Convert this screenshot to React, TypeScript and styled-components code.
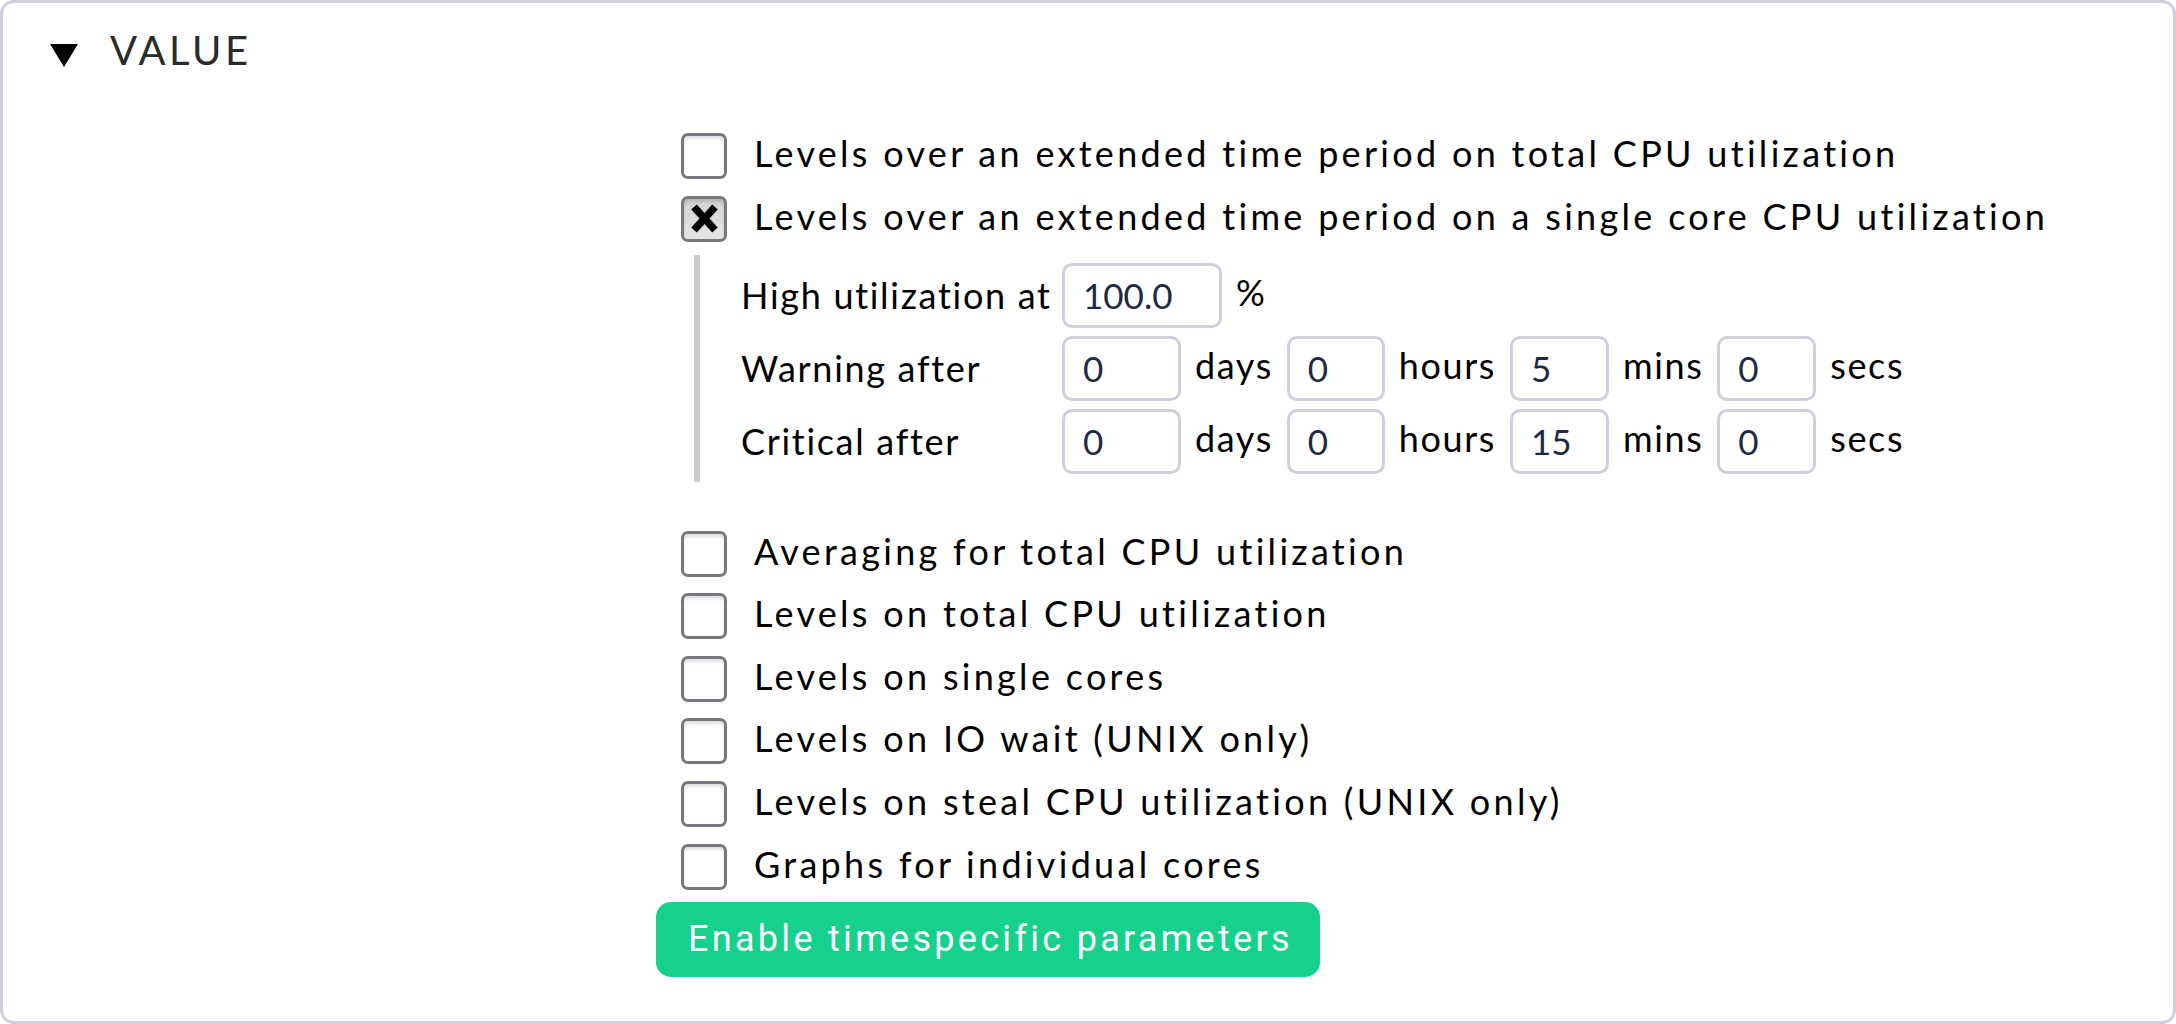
import React from 'react';
import styled, { createGlobalStyle } from 'styled-components';

const Global = createGlobalStyle`
  html, body { margin: 0; padding: 0; background: #fff; }
  body { font-family: Lato, "Noto Sans", sans-serif; color: #000; }
`;

const Frame = styled.div`
  box-sizing: border-box;
  width: 2176px;
  height: 1024px;
  border: 3px solid #cdcfdc;
  border-radius: 14px;
  background: #fff;
  display: flex;
  flex-direction: column;
`;

const Header = styled.div`
  display: flex;
  align-items: flex-start;
  gap: 32px;
  padding: 23px 0 0 47px;
`;

const Triangle = styled.span`
  width: 0;
  height: 0;
  margin-top: 18px;
  border-left: 14px solid transparent;
  border-right: 14px solid transparent;
  border-top: 23px solid #000;
`;

const Title = styled.span`
  font-family: Lato, sans-serif;
  font-size: 40px;
  line-height: 48px;
  letter-spacing: 3.5px;
  color: #2b2b2b;
`;

const Body = styled.div`
  display: flex;
  flex-direction: column;
  align-items: flex-start;
  padding: 50.7px 0 0 653px;
`;

const OptionRow = styled.label`
  display: flex;
  align-items: center;
  gap: 27px;
  height: 62.6px;
  padding-left: 25px;
`;

const Box = styled.span<{ $checked?: boolean }>`
  box-sizing: border-box;
  width: 46px;
  height: 46px;
  border: 3px solid #76787d;
  border-radius: 7px;
  display: flex;
  align-items: center;
  justify-content: center;
  background: ${(p) => (p.$checked ? 'linear-gradient(#d2d2d2, #e6e6e6)' : '#fff')};
  box-shadow: inset 0 3px 3px rgba(0, 0, 0, 0.12);
`;

const OptionLabel = styled.span`
  font-family: Lato, sans-serif;
  font-size: 36px;
  letter-spacing: 3.3px;
  white-space: nowrap;
  margin-top: -6px;
`;

const Nested = styled.div`
  margin: 4.7px 0 40.7px 38px;
  border-left: 6px solid #cccccc;
  padding: 8px 0 8px 41px;
  display: grid;
  grid-template-columns: 321px auto;
  row-gap: 8px;
  align-items: center;
`;

const FieldLabel = styled.span`
  font-family: Lato, sans-serif;
  font-size: 36px;
  letter-spacing: 1.7px;
  white-space: nowrap;
`;

const Fields = styled.div`
  display: flex;
  align-items: center;
  gap: 14px;
`;

const NumInput = styled.input<{ $w: number }>`
  box-sizing: border-box;
  width: ${(p) => p.$w}px;
  height: 65px;
  border: 3px solid #cdd0dc;
  border-radius: 10px;
  padding: 0 0 0 18px;
  font-family: Lato, sans-serif;
  font-size: 35px;
  letter-spacing: 0;
  color: #1e2a45;
  background: #fff;
  outline: none;
`;

const Unit = styled.span`
  font-family: Lato, sans-serif;
  font-size: 36px;
  letter-spacing: 1.6px;
  margin-top: -6px;
`;

const GreenButton = styled.button`
  margin-top: 3.7px;
  width: 664px;
  height: 75px;
  border: none;
  border-radius: 15px;
  background: #15d18c;
  color: #fff;
  font-family: Roboto, sans-serif;
  font-size: 36px;
  letter-spacing: 3.3px;
  text-align: left;
  padding: 0 0 0 32px;
`;

const Cross = () => (
  <svg width="27" height="29" viewBox="0 0 27 29">
    <line x1="3" y1="3" x2="24" y2="26" stroke="#000" strokeWidth="7.5" />
    <line x1="24" y1="3" x2="3" y2="26" stroke="#000" strokeWidth="7.5" />
  </svg>
);

const Option = ({ label, checked }: { label: string; checked?: boolean }) => (
  <OptionRow>
    <Box $checked={checked}>{checked && <Cross />}</Box>
    <OptionLabel>{label}</OptionLabel>
  </OptionRow>
);

const DurationFields = ({ d, h, m, s }: { d: string; h: string; m: string; s: string }) => (
  <Fields>
    <NumInput $w={119} defaultValue={d} />
    <Unit>days</Unit>
    <NumInput $w={98} defaultValue={h} />
    <Unit>hours</Unit>
    <NumInput $w={99} defaultValue={m} />
    <Unit>mins</Unit>
    <NumInput $w={99} defaultValue={s} />
    <Unit>secs</Unit>
  </Fields>
);

export default function App() {
  return (
    <>
      <Global />
      <Frame>
        <Header>
          <Triangle />
          <Title>VALUE</Title>
        </Header>
        <Body>
          <Option label="Levels over an extended time period on total CPU utilization" />
          <Option label="Levels over an extended time period on a single core CPU utilization" checked />
          <Nested>
            <FieldLabel>High utilization at</FieldLabel>
            <Fields>
              <NumInput $w={160} defaultValue="100.0" />
              <Unit>%</Unit>
            </Fields>
            <FieldLabel>Warning after</FieldLabel>
            <DurationFields d="0" h="0" m="5" s="0" />
            <FieldLabel>Critical after</FieldLabel>
            <DurationFields d="0" h="0" m="15" s="0" />
          </Nested>
          <Option label="Averaging for total CPU utilization" />
          <Option label="Levels on total CPU utilization" />
          <Option label="Levels on single cores" />
          <Option label="Levels on IO wait (UNIX only)" />
          <Option label="Levels on steal CPU utilization (UNIX only)" />
          <Option label="Graphs for individual cores" />
          <GreenButton>Enable timespecific parameters</GreenButton>
        </Body>
      </Frame>
    </>
  );
}
